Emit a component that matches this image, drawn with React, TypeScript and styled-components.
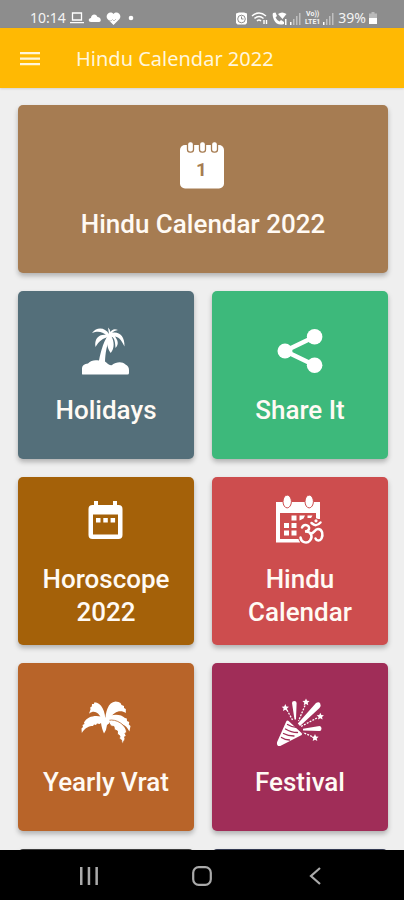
import React from "react";
import styled, { createGlobalStyle } from "styled-components";

const GlobalStyle = createGlobalStyle`
  * { box-sizing: border-box; }
  body { margin: 0; background: #efefef; }
  button { border: 0; padding: 0; background: none; color: inherit; font: inherit; cursor: pointer; }
  svg { display: block; flex: none; }
`;

const Screen = styled.div`
  display: flex;
  flex-direction: column;
  height: 100vh;
  overflow: hidden;
  background: #efefef;
  font-family: Roboto, "Liberation Sans", sans-serif;
`;

const StatusBar = styled.div`
  display: flex;
  align-items: center;
  justify-content: space-between;
  flex: none;
  height: 28px;
  padding: 8px 27px 0 30px;
  background: #8d8d8d;
  color: #f4f4f4;
  font: 14px/20px "Noto Sans", sans-serif;
`;

const StatusGroup = styled.div<{ $gap: number }>`
  display: flex;
  align-items: center;
  gap: ${(p) => p.$gap}px;
`;

const Carrier = styled.span`
  display: flex;
  flex-direction: column;
  font: 700 7px/8px Roboto, sans-serif;
  text-align: center;
`;

const AppBar = styled.header`
  display: flex;
  align-items: center;
  flex: none;
  gap: 36px;
  height: 60px;
  padding: 2px 20px 0;
  background: #ffb903;
  color: #fff6dc;
  box-shadow: 0 1px 2px rgba(0, 0, 0, 0.12);
`;

const Title = styled.h1`
  margin: 0;
  font: 400 20px/28px "Noto Sans", sans-serif;
`;

const Grid = styled.main`
  display: grid;
  flex: 1;
  min-height: 0;
  grid-template-columns: 1fr 1fr;
  grid-auto-rows: 168px;
  gap: 18px;
  padding: 17px 16px 0 18px;
  overflow: hidden;
`;

const Card = styled.button<{ $color: string; $wide?: boolean }>`
  display: flex;
  flex-direction: column;
  align-items: center;
  justify-content: center;
  gap: 18px;
  padding: 2px 16px 0;
  grid-column: ${(p) => (p.$wide ? "1 / -1" : "auto")};
  border-radius: 5px;
  background: ${(p) => p.$color};
  box-shadow: 0 3px 5px rgba(0, 0, 0, 0.26);
`;

const CardLabel = styled.span`
  color: #fffaf4;
  font-size: 26px;
  font-weight: 500;
  line-height: 33px;
  text-align: center;
`;

const NavBar = styled.nav`
  display: flex;
  flex: none;
  height: 50px;
  padding: 2px 8% 0;
  background: #000;
`;

const NavButton = styled.button`
  display: flex;
  flex: 1;
  align-items: center;
  justify-content: center;
`;

const Icon = ({ children }: { children: React.ReactNode }) => (
  <svg width="50" height="50" viewBox="0 0 50 50" fill="#fff" aria-hidden="true">
    {children}
  </svg>
);

const NotepadIcon = () => (
  <Icon>
    <rect x="2" y="5" width="44" height="43.5" rx="5" />
    {[12.5, 24.5, 36.5].map((x) => (
      <rect key={x} x={x - 3} y="1.7" width="6" height="10.5" rx="2.6" stroke="#a67c52" strokeWidth="1.3" />
    ))}
    <text x="23.5" y="36" fill="#a67c52" fontSize="19" fontWeight="700" textAnchor="middle" fontFamily="Roboto, sans-serif">1</text>
  </Icon>
);

const IslandIcon = () => (
  <Icon>
    <path d="M1.5 48.5Q.8 48.5 1 47V43C1 39 3.500 38 7 37.500C10 34 14 33.800 18 34.500C22 16 25 13 27 9L31 10C25 18 24.500 28 24 35.500C26 36.500 28 40 31 39C35 36 41 35 44.500 38.500Q48 40 48 44V47Q48 48.500 46.500 48.500Z" />
    <path d="M28 8C24 1.500 16 .5 11 7C17 4.500 22 6 25 9C18 8 13 13 14.500 21C18 15 22 12 27.500 11C25 15 26 22 29.700 27C34 22 33 15 30.500 10.500C34 12 34 17 34.500 22C38.500 18 36.500 14 34 10.500C39 11 41 16 43.500 20.500C44 10 37.500 5 31 7C33 5 34 4.500 37 4C33 2 30.500 4 29.500 6Q29 3 27 1.500Q27.500 5 28 8Z" />
  </Icon>
);

const ShareIcon = () => (
  <Icon>
    <path d="M39.600 10.700L10 25L39.600 39.300" fill="none" stroke="#fff" strokeWidth="4.600" />
    <circle cx="10" cy="25" r="7.500" />
    <circle cx="39.600" cy="10.700" r="7.800" />
    <circle cx="39.600" cy="39.300" r="7.800" />
  </Icon>
);

const DateIcon = () => (
  <Icon>
    <path fillRule="evenodd" d="M13 6h4v4h15V6h4v4h1.500a4 4 0 0 1 4 4v26a4 4 0 0 1-4 4h-26a4 4 0 0 1-4-4V14a4 4 0 0 1 4-4H13ZM12 19.500V39.500H37V19.500Z" />
    <path d="M15 23h4.500v4.500h-4.500ZM22.300 23h4.500v4.500h-4.500ZM29.600 23h4.500v4.500h-4.500Z" />
  </Icon>
);

const OmStrokes = () => (
  <>
    <path d="M27 32.500C29 28.500 35 30 34 34Q33 36.500 30 36.500C36.500 36 38 42 35 45.500C31.500 49.500 26 47 25.500 42.500" />
    <path d="M35.500 38.500C39 39 39.500 34 43 34C47.500 34 48.300 40 46.500 43.500C45 46.500 41.500 46 40.500 43.500" />
    <path d="M36.500 28Q41 32.500 45.500 27.500" />
  </>
);

const OmCalendarIcon = () => (
  <Icon>
    <path fillRule="evenodd" d="M1 7H45V24H41V18H5V44H25V47.500H1Z" />
    <g stroke="#cc4d4e" strokeWidth="1">
      <ellipse cx="12.200" cy="6.500" rx="4.200" ry="6.400" />
      <ellipse cx="34.200" cy="6.500" rx="4.200" ry="6.400" />
    </g>
    <path d="M16.500 20.500h5v5h-5ZM24.500 20.500h5.500l-1.500 3-4 2ZM32.500 20.500h5l-1.500 2.500h-3.500ZM9 28h5v5H9ZM16.500 28h5v5h-5ZM9 35.500h5v5H9ZM16.500 35.500h5v5h-5Z" />
    <g fill="none" stroke="#cc4d4e" strokeWidth="4.600" strokeLinecap="round"><OmStrokes /></g>
    <g fill="none" stroke="#fff" strokeWidth="2.500" strokeLinecap="round"><OmStrokes /></g>
    <circle cx="41" cy="25.800" r="2.600" fill="#cc4d4e" />
    <circle cx="41" cy="25.800" r="1.600" />
  </Icon>
);

const PalmIcon = () => (
  <Icon>
    <path d="M24.500 24C24.500 13 20.500 4.500 13.500 4.200L12.800 6L11 6L10.800 8.500L9.200 9.500L9.500 11.500L8 15.700C13 12 17.500 14 20.500 21Z" />
    <path d="M24 25C24.500 13 27 4.500 34.500 3.500Q38 3.500 39.500 5L40.500 7L43 8L43 10L44.800 11L44.800 15C40 11.500 33 13 28.500 21Z" />
    <path d="M25 20C17 16.500 7 17 3 24.500L3.500 26L1.500 27L2 29L.5 30.500L.8 35C4.500 29.500 8 28 12 28L13 26.500L15 27L16 25.500L18.500 26L20 25C20.500 29 21.500 32 23 35.500Q25.500 32.500 26 27L31 22Z" />
    <path d="M25 20C30 15.500 40 15.500 44 20L45.800 20.500L46 23L48.200 24L47.800 26.500L49.500 28L48.400 33.500C45 26 38 24 30 24Z" />
    <path d="M27 22.500C36 20 45.500 28 45.500 34L44 35.500L45 37.500L43.500 39L44 41L41.300 46L40.500 42L38.500 40.500L39 38L36.500 36L36.500 33L33.500 31.500L33 28.500L30 28L28.500 25.500Z" stroke="#b86429" strokeWidth=".8" />
    <circle cx="25" cy="23" r="3.500" />
  </Icon>
);

const Star = ({ x, y }: { x: number; y: number }) => (
  <path transform={`translate(${x} ${y})`} d="M0-3.600L1.100-1.200L3.600-1L1.700.8L2.300 3.300L0 2L-2.300 3.300L-1.700.8L-3.600-1L-1.100-1.200Z" />
);

const PartyIcon = () => (
  <Icon>
    <path d="M12.600 24L25.500 36L5 46.500Q3 47 3.500 44.500Z" stroke="#fff" strokeWidth="3" strokeLinejoin="round" />
    <g fill="none" stroke="#a02d58" strokeWidth="1.300" strokeLinecap="round">
      <path d="M12.500 26.500Q18 30 24 29.500M10.500 31Q16 34.500 22.500 34.500M8.500 35.500Q13 38 19 38M6.500 39.500Q10 42 14.500 42" />
    </g>
    <path d="M17 5Q17 3 19.300 3T21.600 5L21 21.500H19.500ZM41 5Q44 3.500 45.200 5.500Q46.500 8 44.500 10L25 28L22.800 25.500ZM44.500 28Q46.500 28 46.500 30.500T44.500 33L28 32.500V30.700Z" />
    <g fill="none" stroke="#fff" strokeWidth="1.300" strokeDasharray="2 1.200">
      <path d="M12 12L17.500 22M30 7.500L23.500 23M42 20L26 28.500M37 38.500L28 34.500" />
    </g>
    <Star x={10.300} y={9.700} />
    <Star x={31} y={4} />
    <Star x={45.300} y={18.300} />
    <Star x={40} y={39.700} />
  </Icon>
);

const Signal = () => (
  <svg width="12" height="13" viewBox="0 0 12 13" fill="#fff" aria-hidden="true">
    <path d="M0 10h1.500v3H0Z" />
    <path d="M3 7h1.500v6H3ZM6 4h1.500v9H6ZM9 1h1.500v12H9Z" opacity=".45" />
  </svg>
);

const tiles = [
  { label: "Hindu Calendar 2022", color: "#a67c52", icon: <NotepadIcon />, wide: true },
  { label: "Holidays", color: "#546f7a", icon: <IslandIcon /> },
  { label: "Share It", color: "#3db97b", icon: <ShareIcon /> },
  { label: "Horoscope 2022", color: "#a46109", icon: <DateIcon /> },
  { label: "Hindu Calendar", color: "#cd4d4e", icon: <OmCalendarIcon /> },
  { label: "Yearly Vrat", color: "#b86429", icon: <PalmIcon /> },
  { label: "Festival", color: "#a02d58", icon: <PartyIcon /> },
  { label: "", color: "#3c3c3c", icon: null },
  { label: "", color: "#343a52", icon: null },
];

export default function App() {
  return (
    <Screen>
      <GlobalStyle />
      <StatusBar>
        <StatusGroup $gap={4}>
          <span>10:14</span>
          <svg width="14" height="12" viewBox="0 0 14 12" fill="none" stroke="#fff" strokeWidth="1.300" aria-hidden="true">
            <path d="M2.500 1h9v7h-9ZM0 10.700h14" />
          </svg>
          <svg width="14" height="10" viewBox="0 0 14 10" fill="#fff" aria-hidden="true">
            <path d="M3 9C0 9 0 5 3 5C3 1 8 0 9.500 4C13 4 14 9 11 9Z" />
          </svg>
          <svg width="15" height="13" viewBox="0 0 15 13" fill="#fff" aria-hidden="true">
            <path d="M7.500 13L1.500 7C-1.500 3 4-2 7.500 2C11-2 16.500 3 13.500 7Z" />
            <path d="M3 8.500l2 .5 1.500-1.500L8 9l2-2" fill="none" stroke="#aaa" strokeWidth=".7" />
          </svg>
          <svg width="12" height="6" viewBox="0 0 12 6" fill="#fff" aria-hidden="true">
            <circle cx="6" cy="3" r="2.300" />
          </svg>
        </StatusGroup>
        <StatusGroup $gap={3}>
          <svg width="13" height="13" viewBox="0 0 13 13" aria-hidden="true">
            <path d="M1 1.500L4 .5H9L12 1.500V11L10.500 12.500H2.500L1 11Z" fill="#fff" />
            <circle cx="6.500" cy="7" r="3.800" fill="none" stroke="#8d8d8d" />
            <path d="M6.500 4.500V7H8.500" fill="none" stroke="#8d8d8d" />
          </svg>
          <svg width="18" height="13" viewBox="0 0 18 13" fill="none" stroke="#fff" strokeWidth="1.400" aria-hidden="true">
            <path d="M1 4Q8 -2 15 4M3.500 6.500Q8 2.500 12.500 6.500M6 9Q8 7 10 9" />
            <path d="M13 8v4M15.500 8v4" />
          </svg>
          <svg width="15" height="13" viewBox="0 0 15 13" fill="#fff" aria-hidden="true">
            <path d="M1 1l2.500-.5L5 4L3.500 5.500Q5 8.500 7.500 9.500L9 8l3 2v2Q5 14 2 8Q0 4 1 1ZM6 2Q10-1 14.500 2L10.500 7Z" />
            <path d="M13 7h1.500v6H13Z" />
          </svg>
          <Signal />
          <Carrier><span>Vo))</span><span>LTE1</span></Carrier>
          <Signal />
          <span>39%</span>
          <svg width="8" height="12" viewBox="0 0 8 12" fill="#fff" aria-hidden="true">
            <path d="M2.500 0h3v1.500H8V7H0V1.500h2.500Z" opacity=".4" />
            <path d="M0 6h8v6H0Z" />
          </svg>
        </StatusGroup>
      </StatusBar>
      <AppBar>
        <button type="button" aria-label="Open menu">
          <svg width="20" height="16" viewBox="0 0 20 16" fill="currentColor" aria-hidden="true">
            <path d="M0 1h20v2.300H0ZM0 6.500h20v2.300H0ZM0 12h20v2.300H0Z" />
          </svg>
        </button>
        <Title>Hindu Calendar 2022</Title>
      </AppBar>
      <Grid>
        {tiles.map((t, i) => (
          <Card key={i} type="button" $color={t.color} $wide={t.wide}>
            {t.icon}
            <CardLabel>{t.label}</CardLabel>
          </Card>
        ))}
      </Grid>
      <NavBar>
        <NavButton type="button" aria-label="Recent apps">
          <svg width="18" height="18" viewBox="0 0 18 18" fill="#aaa" aria-hidden="true">
            <path d="M0 0h2.500v18H0ZM7.700 0h2.500v18H7.700ZM15.400 0h2.500v18h-2.500Z" />
          </svg>
        </NavButton>
        <NavButton type="button" aria-label="Home">
          <svg width="20" height="20" viewBox="0 0 20 20" fill="none" stroke="#aaa" strokeWidth="2.200" aria-hidden="true">
            <rect x="1.200" y="1.200" width="17.600" height="17.600" rx="5.500" />
          </svg>
        </NavButton>
        <NavButton type="button" aria-label="Back">
          <svg width="12" height="18" viewBox="0 0 12 18" fill="none" stroke="#aaa" strokeWidth="2.200" aria-hidden="true">
            <path d="M11 1L2 9L11 17" />
          </svg>
        </NavButton>
      </NavBar>
    </Screen>
  );
}
